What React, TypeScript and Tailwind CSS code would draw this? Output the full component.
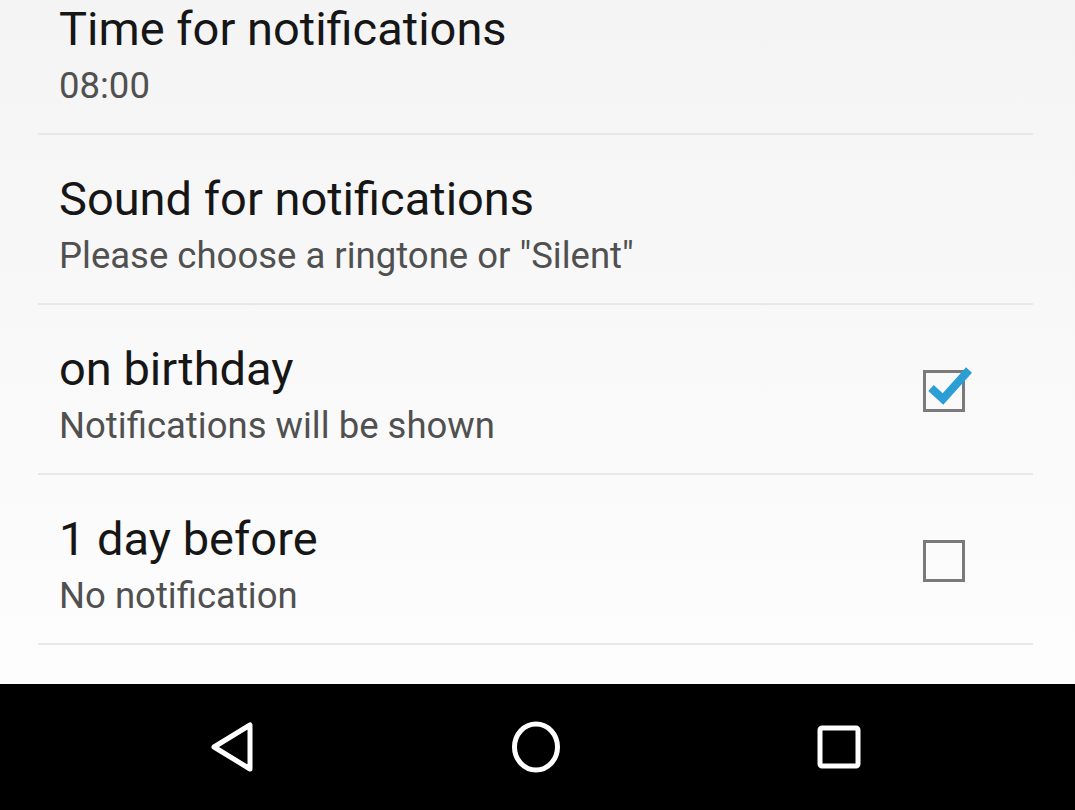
import React from "react";

const rows = [
  { title: "Time for notifications", sub: "08:00", check: null as null | boolean },
  { title: "Sound for notifications", sub: 'Please choose a ringtone or "Silent"', check: null },
  { title: "on birthday", sub: "Notifications will be shown", check: true },
  { title: "1 day before", sub: "No notification", check: false },
];

function CheckBox({ checked }: { checked: boolean }) {
  return (
    <div className="relative w-[42px] h-[42px]">
      <div className="absolute inset-0 border-[3px] border-[#7a7a7a]" />
      {checked && (
        <svg className="absolute left-[2px] top-[-8px]" width="50" height="46" viewBox="0 0 50 46">
          <path d="M6 26 L18 37 L44 8" fill="none" stroke="#2b9ed6" strokeWidth="8" strokeLinejoin="miter" strokeLinecap="butt" />
        </svg>
      )}
    </div>
  );
}

export default function App() {
  return (
    <div className="w-[1075px] h-[810px] flex flex-col overflow-hidden" style={{ fontFamily: "Roboto, 'Noto Sans', sans-serif" }}>
      <div className="h-[684px] flex flex-col bg-gradient-to-b from-[#f4f4f4] to-[#fdfdfd] overflow-hidden">
        <div className="mt-[-35px] flex flex-col">
          {rows.map((r, i) => (
            <div key={i} className="ml-[38px] mr-[42px] h-[170px] border-b-2 border-[#e8e8e8] flex items-start pl-[21px] pr-[68px] pt-[36px]">
              <div className="flex-1 flex flex-col">
                <div className="text-[47px] leading-[56px] text-[#161616]">{r.title}</div>
                <div className="text-[36.5px] leading-[44px] text-[#505050] mt-[7px]">{r.sub}</div>
              </div>
              {r.check !== null && (
                <div className="mt-[29px]">
                  <CheckBox checked={r.check} />
                </div>
              )}
            </div>
          ))}
        </div>
      </div>
      <div className="flex-1 bg-black flex items-center">
        <div className="w-full flex items-center justify-between pl-[208px] pr-[213px]">
          <svg width="48" height="52" viewBox="0 0 48 52">
            <path d="M42 4 L42 48 L6 26 Z" fill="none" stroke="white" strokeWidth="5" strokeLinejoin="round" />
          </svg>
          <svg width="52" height="54" viewBox="0 0 52 54">
            <ellipse cx="26" cy="27" rx="21.5" ry="23" fill="none" stroke="white" strokeWidth="5" />
          </svg>
          <svg width="46" height="46" viewBox="0 0 46 46">
            <rect x="4" y="4" width="38" height="38" rx="2" fill="none" stroke="white" strokeWidth="5" />
          </svg>
        </div>
      </div>
    </div>
  );
}
